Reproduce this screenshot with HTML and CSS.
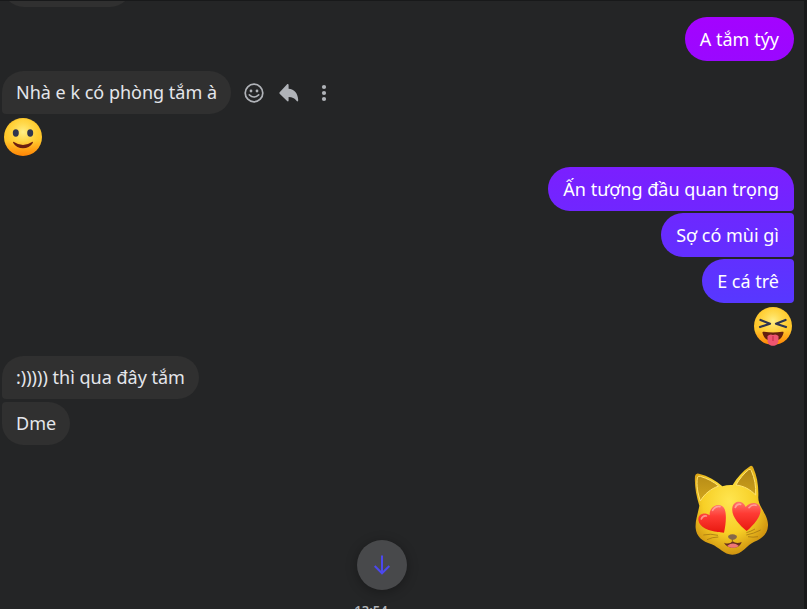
FILE: index.html
```html
<!DOCTYPE html>
<html lang="vi">
<head>
<meta charset="utf-8">
<title>Chat</title>
<link rel="stylesheet" href="styles.css">
</head>
<body>
<main class="thread">
  <div class="group in"><div class="bubble previous"></div></div>
  <div class="group out"><div class="bubble violet">A tắm týy</div></div>
  <div class="group in">
    <div class="line">
      <div class="bubble first">Nhà e k có phòng tắm à</div>
      <div class="actions">
        <button class="action" aria-label="React"><svg width="20" height="20" viewBox="0 0 20 20"><circle cx="10" cy="10" r="8.8" fill="none" stroke="currentColor" stroke-width="1.7"/><circle cx="7" cy="8" r="1.4" fill="currentColor"/><circle cx="13" cy="8" r="1.4" fill="currentColor"/><path d="M5.3 11.800q4.700 4.400 9.400 0" fill="none" stroke="currentColor" stroke-width="1.6" stroke-linecap="round"/></svg></button>
        <button class="action" aria-label="Reply"><svg width="20" height="20" viewBox="0 0 20 20"><path d="M9.600 1.900v3.900c5.800.3 9.200 4.500 9.600 11.200.1 1.600-1 1.800-1.700.8-1.900-2.700-4.200-3.800-7.900-3.800v3.500c0 .9-.8 1.200-1.500.6L.900 10.900c-.7-.6-.7-1.300 0-1.900l7.200-7.700c.7-.6 1.500-.3 1.500.6z" fill="currentColor"/></svg></button>
        <button class="action" aria-label="More"><svg width="20" height="20" viewBox="0 0 20 20"><circle cx="10" cy="4" r="2.100" fill="currentColor"/><circle cx="10" cy="10" r="2.100" fill="currentColor"/><circle cx="10" cy="16" r="2.100" fill="currentColor"/></svg></button>
      </div>
    </div>
    <svg class="emoji" viewBox="0 0 40 40" role="img" aria-label="Slightly smiling face">
      <defs>
        <linearGradient id="face" x1="0" y1="0" x2="0" y2="1"><stop offset="0" stop-color="#ffc92c"/><stop offset=".6" stop-color="#ffc62a"/><stop offset="1" stop-color="#ff8405"/></linearGradient>
        <radialGradient id="glow" cx=".5" cy=".36" r=".5"><stop offset="0" stop-color="#fff08a"/><stop offset="1" stop-color="#ffe04a" stop-opacity="0"/></radialGradient>
      </defs>
      <circle cx="20" cy="20" r="19" fill="url(#face)"/><circle cx="20" cy="20" r="18" fill="url(#glow)"/>
      <ellipse cx="12.800" cy="16" rx="3" ry="3.700" fill="#2f3550"/><ellipse cx="27.200" cy="16" rx="3" ry="3.700" fill="#2f3550"/>
      <path d="M11 25q9 6 18 0q1.300-.5.800.9c-4 7-15.600 7-19.600 0q-.5-1.400.8-.9z" fill="#6b1e10"/>
    </svg>
  </div>
  <div class="group out">
    <div class="bubble purple first">Ấn tượng đầu quan trọng</div>
    <div class="bubble indigo middle">Sợ có mùi gì</div>
    <div class="bubble blue middle">E cá trê</div>
    <svg class="emoji" viewBox="0 0 40 40" role="img" aria-label="Squinting face with tongue">
      <circle cx="20" cy="20" r="19" fill="url(#face)"/><circle cx="20" cy="20" r="18" fill="url(#glow)"/>
      <path d="M7.500 14l9.500 3.700L7 21M32.500 14L23 17.700l10 3.300" fill="none" stroke="#2f3550" stroke-width="2.200" stroke-linecap="round" stroke-linejoin="round"/>
      <path d="M9.500 27c-.3-1 .3-1.500 1.500-1.200q9 1.200 18 0c1.200-.3 1.800.2 1.500 1.200C29 33 25 35 20 35S11 33 9.500 27z" fill="#64200f"/>
      <path d="M14.500 30q2.500-2.500 5.500-1 3-1.500 5.500 1v4.500c0 3.200-2.500 5.300-5.500 5.300s-5.500-2.100-5.500-5.300z" fill="#ee5570"/><path d="M20 30v5" stroke="#c9304d" stroke-width="1.200"/>
    </svg>
  </div>
  <div class="group in">
    <div class="bubble first">:))))) thì qua đây tắm</div>
    <div class="bubble last">Dme</div>
  </div>
  <div class="group out sticker-row">
    <svg class="sticker" viewBox="45 25 228 276" role="img" aria-label="Smiling cat with heart eyes">
      <defs>
        <radialGradient id="cat" cx=".47" cy=".4" r=".6"><stop offset="0" stop-color="#ffe650"/><stop offset=".6" stop-color="#f7cf26"/><stop offset="1" stop-color="#d09410"/></radialGradient>
        <linearGradient id="ear" x1="0" y1="0" x2="0" y2="1"><stop offset="0" stop-color="#b08616"/><stop offset="1" stop-color="#d2a51c"/></linearGradient>
        <linearGradient id="heart" x1="0" y1="0" x2="0" y2="1"><stop offset="0" stop-color="#ff756d"/><stop offset=".4" stop-color="#fe3b34"/><stop offset="1" stop-color="#e8180f"/></linearGradient>
      </defs>
      <path d="M61 150C51 118 46 88 48 61q2-10 12-7c27 7 51 20 70 38q15-5 31-4C174 65 192 46 211 33q8-6 12 3c11 25 16 53 15 85-1 14 3 24 11 38 10 18 19 33 18 51-1 22-16 39-41 48-22 9-37 39-66 39-26 0-39-22-62-31-29-8-46-24-48-48-2-23 6-40 11-68z" fill="url(#cat)"/>
      <path d="M64 136C56 112 52 88 55 67q1-7 9-5c22 7 39 16 55 29-24 9-42 23-55 45zM171 88C182 69 194 54 209 42q5-4 8 3c10 23 14 46 13 73-16-16-34-27-59-30z" fill="url(#ear)" stroke="#ffe370" stroke-width="3"/>
      <path d="M135 231C108 230 65 222 59 197c-6-21 17-30 33-18-3-28 34-43 45-18 6 14 4 45-2 70z" fill="url(#heart)"/>
      <path d="M203 226C181 208 156 182 160 156c4-22 32-24 40-2 15-19 45-14 45 9 0 20-20 45-42 63z" fill="url(#heart)"/>
      <path d="M67 190q4-11 15-9M101 164q8-14 22-11M169 155q5-12 16-9M210 156q9-11 21-7" fill="none" stroke="#ffc2b6" stroke-width="5" stroke-linecap="round" opacity=".65"/>
      <path d="M73 238q22-5 44 1M84 252q16-8 34-8M202 238q22-4 43-15M202 231q12-3 26-11M207 243q15 3 30 0" fill="none" stroke="#a87a12" stroke-width="2.500"/>
      <path d="M135 261q15 7 26-4 11 9 27 2c-4 12-12 17-25 17s-23-5-28-15z" fill="#672e20"/>
      <path d="M145 270q17-13 34 0c-6 8-28 8-34 0z" fill="#ef7775"/>
      <path d="M160 249v10" stroke="#8e6412" stroke-width="3"/>
      <path d="M148 240q12-8 25 0c3 6-5 12-12 12s-16-6-13-12z" fill="#85684a"/>
    </svg>
  </div>
  <time class="stamp">13:54</time>
</main>
<button class="jump" aria-label="Scroll to latest"><svg width="20" height="20" viewBox="0 0 20 20"><path d="M10 .5V18M2.700 11l7.300 7.300 7.300-7.300" fill="none" stroke="#4c48ee" stroke-width="2"/></svg></button>
</body>
</html>
```
FILE: styles.css
```css
* { box-sizing: border-box; }
body {
  margin: 0;
  height: 100vh;
  overflow: hidden;
  background: #242526;
  border-top: 1px solid #18191a;
  border-right: 3px solid #18191a;
  color: #e4e6eb;
  font: 18px/24px "Noto Sans", "Open Sans", sans-serif;
}
button { border: 0; padding: 0; cursor: pointer; }
svg { display: block; }
.thread {
  display: flex;
  flex-direction: column;
  gap: 10px;
  padding: 0 10px 0 2px;
}
.group { display: flex; flex-direction: column; gap: 3px; align-items: flex-start; }
.out { gap: 2px; align-items: flex-end; }
.line { display: flex; align-items: center; gap: 13px; }
.bubble {
  padding: 10px 15px;
  border-radius: 22px;
  background: #303030;
  white-space: nowrap;
}
.in .bubble { padding: 9px 14px 10px; }
.in .previous { width: 130px; height: 44px; margin-top: -38px; }
.out .bubble { color: #fff; }
.in .first { border-bottom-left-radius: 4px; }
.in .last { border-top-left-radius: 4px; }
.out .first { border-bottom-right-radius: 4px; }
.out .middle { border-top-right-radius: 4px; border-bottom-right-radius: 4px; }
.out .violet { background: linear-gradient(#a403ff, #9a08ff); }
.out .purple { background: linear-gradient(#7b1fff, #7026ff); }
.out .indigo { background: linear-gradient(#6d28ff, #632fff); }
.out .blue { background: linear-gradient(#6130ff, #5738ff); }
.actions { display: flex; gap: 15px; }
.action { background: none; color: #b0b3b8; }
.emoji { width: 40px; height: 40px; margin: 0 1px; }
.out .emoji { margin-top: 1px; }
.sticker-row { padding: 9px 24px 0 0; }
.sticker { width: 76px; height: 92px; }
.stamp {
  margin-top: 34px;
  padding-right: 54px;
  font-size: 13px;
  font-weight: 600;
  line-height: 20px;
  text-align: center;
  color: #b0b3b8;
}
.jump {
  position: absolute;
  left: calc(50% - 47px);
  bottom: 19px;
  width: 50px;
  height: 50px;
  border-radius: 50%;
  display: grid;
  place-items: center;
  background: #48494b;
  box-shadow: 0 2px 12px rgba(0, 0, 0, .3);
}
```
